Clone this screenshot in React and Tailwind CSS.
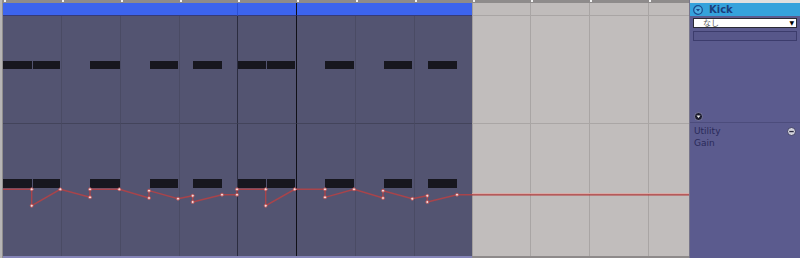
import React from "react";

const columns = [
  { w: "w-[58px]", gray: false, line: "none" },
  { w: "w-[59px]", gray: false, line: "sub" },
  { w: "w-[59px]", gray: false, line: "sub" },
  { w: "w-[58px]", gray: false, line: "sub" },
  { w: "w-[59px]", gray: false, line: "beat" },
  { w: "w-[59px]", gray: false, line: "bar" },
  { w: "w-[59px]", gray: false, line: "sub" },
  { w: "w-[58px]", gray: false, line: "sub" },
  { w: "w-[58px]", gray: true, line: "edge" },
  { w: "w-[59px]", gray: true, line: "sub" },
  { w: "w-[59px]", gray: true, line: "sub" },
  { w: "w-[41px]", gray: true, line: "sub" },
];

const laneLine = {
  none: "",
  sub: "border-l border-l-[#4a4b64]",
  beat: "border-l border-l-[#2b2c3f]",
  bar: "border-l border-l-[#101017]",
};

const grayLine = {
  edge: "border-l border-l-[#a29e9d]",
  sub: "border-l border-l-[#a9a5a4]",
};

const headerLine = {
  none: "",
  sub: "",
  beat: "border-l border-l-[#2c50d4]",
  bar: "border-l border-l-[#101017]",
};

const notes = [
  [3, 32],
  [33, 60],
  [90, 120],
  [150, 178],
  [193, 222],
  [238, 266],
  [267, 295],
  [325, 354],
  [384, 412],
  [428, 457],
];

const envelope = [
  [3, 189.3],
  [31.7, 189.3],
  [31.7, 205.7],
  [60.3, 189.3],
  [90, 197.3],
  [90, 189.3],
  [119.3, 189.3],
  [149, 198],
  [149, 190.7],
  [178, 198.7],
  [192.7, 195.7],
  [192.7, 202],
  [222, 194.7],
  [237, 194.7],
  [237, 189.3],
  [265.7, 189.3],
  [265.7, 205.7],
  [294.7, 189.3],
  [325, 189.3],
  [325, 197.3],
  [354, 189.3],
  [383, 198],
  [383, 190.7],
  [412.3, 198.7],
  [427.3, 195.7],
  [427.3, 202],
  [457, 194.7],
  [472, 194.7],
];

function Column({ col }) {
  const lanes = col.gray
    ? `bg-[#c1bdbc] ${grayLine[col.line]}`
    : `bg-[#535471] ${laneLine[col.line]}`;
  const header = col.gray
    ? `bg-[#c0bcbb] border-b border-b-[#a9a5a4] ${grayLine[col.line]}`
    : `bg-[#3c64ee] border-b border-b-[#363b78] ${headerLine[col.line]}`;

  return (
    <div className={`flex flex-col ${col.w}`}>
      <div className="h-[3px] bg-[#8e8b8b] pl-[1px]">
        <div className="h-[2px] w-[2px] bg-[#f2f2f2]" />
      </div>
      <div className={`h-[13px] ${header}`} />
      <div
        className={`h-[108px] border-b ${
          col.gray ? "border-b-[#aaa6a5]" : "border-b-[#43445b]"
        } ${lanes}`}
      />
      <div className={`h-[132px] ${lanes}`} />
      <div className={`h-[2px] ${col.gray ? "bg-[#8e8a8a]" : "bg-[#8585b8]"}`} />
    </div>
  );
}

function ClipDrawing() {
  const path = envelope.map((p, i) => `${i ? "L" : "M"}${p[0]},${p[1]}`).join(" ");
  const markers = envelope.slice(1, -1);

  return (
    <svg
      className="pointer-events-none absolute left-0 top-0"
      width="686"
      height="258"
      viewBox="3 0 686 258"
    >
      {notes.map(([a, b]) => (
        <rect key={`u${a}`} x={a} y={61} width={b - a} height={8} fill="#17171f" />
      ))}
      {notes.map(([a, b]) => (
        <rect key={`l${a}`} x={a} y={179} width={b - a} height={9} fill="#17171f" />
      ))}
      <path d={path} fill="none" stroke="#a8444b" strokeWidth="1.4" />
      <line x1="472" y1="193.6" x2="689" y2="193.6" stroke="#dba9a5" strokeWidth="1" />
      <line x1="472" y1="194.8" x2="689" y2="194.8" stroke="#b23a3a" strokeWidth="1.3" />
      {markers.map(([x, y], i) => (
        <circle key={i} cx={x} cy={y} r="1.5" fill="#f4dcdc" stroke="#b8474a" strokeWidth="0.8" />
      ))}
    </svg>
  );
}

function DeviceIcon({ ring, fill, tri }) {
  return (
    <svg width="10" height="10" viewBox="0 0 10 10">
      <circle cx="5" cy="5" r="4.3" fill={fill} stroke={ring} strokeWidth="1.2" />
      <path d="M2.9 3.9 L7.1 3.9 L5 6.6 Z" fill={tri} />
    </svg>
  );
}

function Panel() {
  return (
    <div className="flex w-[111px] flex-col border-l border-[#76748a] bg-[#5b5b8e] font-['DejaVu_Sans',sans-serif]">
      <div className="flex h-[123px] flex-col border-b border-[#4c4c7c]">
        <div className="h-[3px] bg-[#dfdfdf]" />
        <div className="flex h-[13px] items-center gap-[6px] bg-[#35a2dc] pl-[3px]">
          <DeviceIcon ring="#1b4a8c" fill="#4fb0e3" tri="#1b4a8c" />
          <span className="text-[10px] font-bold leading-none text-[#1b3f7c]">Kick</span>
        </div>
        <div className="mx-[3px] mt-[2px] flex h-[10px] items-center justify-between border border-[#2a2a35] bg-white pl-[9px] pr-[2px]">
          <span className="font-['Noto_Sans_CJK_JP',sans-serif] text-[8px] leading-none text-[#5a5a5a]">
            なし
          </span>
          <span className="text-[6px] leading-none text-black">▼</span>
        </div>
        <div className="mx-[3px] mt-[3px] h-[10px] border border-[#3c3c6c] bg-[#57578a]" />
        <div className="mt-auto mb-[1px] pl-[4px]">
          <svg width="9" height="9" viewBox="0 0 9 9">
            <circle cx="4.5" cy="4.5" r="4" fill="#1c1c2e" stroke="#8a8ab0" strokeWidth="0.8" />
            <path d="M2.5 3.4 L6.5 3.4 L4.5 6 Z" fill="#f0f0f0" />
          </svg>
        </div>
      </div>
      <div className="flex flex-col px-[4px] pt-[2px] text-[9px] leading-[12px] text-[#2a2a5a]">
        <div className="flex items-center justify-between">
          <span>Utility</span>
          <svg width="9" height="9" viewBox="0 0 9 9">
            <circle cx="4.5" cy="4.5" r="4" fill="#d2d2da" stroke="#33335a" strokeWidth="0.9" />
            <rect x="2.3" y="3.9" width="4.4" height="1.3" fill="#2a2a40" />
          </svg>
        </div>
        <span>Gain</span>
      </div>
    </div>
  );
}

export default function App() {
  return (
    <div className="flex h-[258px] w-[800px] overflow-hidden bg-[#c1bdbc]">
      <div className="w-[3px] border-r border-[#8f8d8d] bg-[#b7b5b5]" />
      <div className="relative flex w-[686px]">
        {columns.map((col, i) => (
          <Column key={i} col={col} />
        ))}
        <ClipDrawing />
      </div>
      <Panel />
    </div>
  );
}
